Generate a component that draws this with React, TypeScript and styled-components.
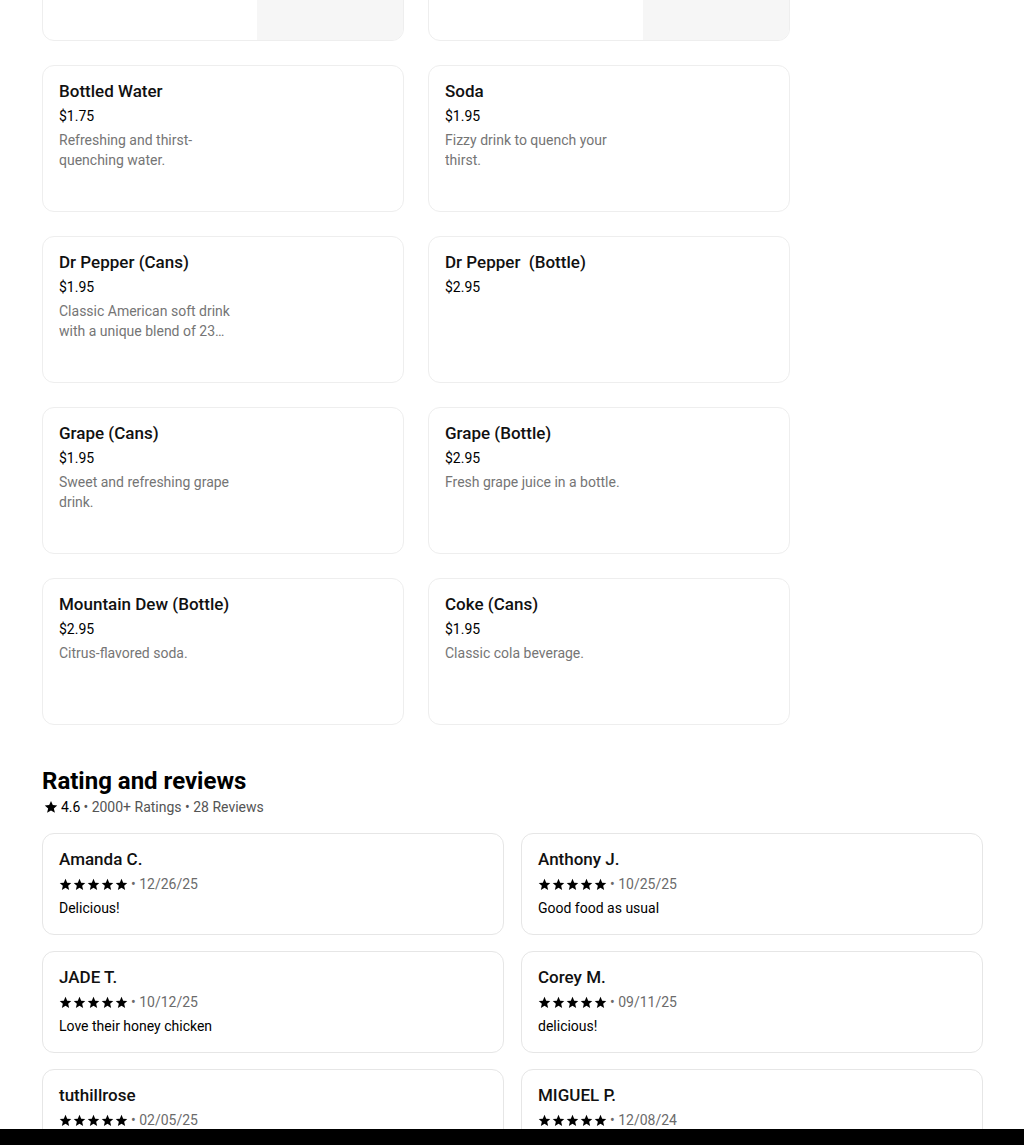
import { createGlobalStyle, styled } from 'styled-components';

const GlobalStyle = createGlobalStyle`
  body {
    margin: 0;
    background: #ffffff;
    font-family: Roboto, 'Liberation Sans', sans-serif;
    color: #000000;
  }
  * {
    box-sizing: border-box;
  }
`;

interface MenuItemType {
  name: string;
  price?: string;
  description?: string;
  hasImage?: boolean;
}

interface ReviewType {
  name: string;
  date: string;
  text: string;
}

const menuItems: MenuItemType[] = [
  { name: '', hasImage: true },
  { name: '', hasImage: true },
  { name: 'Bottled Water', price: '$1.75', description: 'Refreshing and thirst-quenching water.' },
  { name: 'Soda', price: '$1.95', description: 'Fizzy drink to quench your thirst.' },
  {
    name: 'Dr Pepper (Cans)',
    price: '$1.95',
    description: 'Classic American soft drink with a unique blend of 23 flavors.',
  },
  { name: 'Dr Pepper\u00a0 (Bottle)', price: '$2.95' },
  { name: 'Grape (Cans)', price: '$1.95', description: 'Sweet and refreshing grape drink.' },
  { name: 'Grape (Bottle)', price: '$2.95', description: 'Fresh grape juice in a bottle.' },
  { name: 'Mountain Dew (Bottle)', price: '$2.95', description: 'Citrus-flavored soda.' },
  { name: 'Coke (Cans)', price: '$1.95', description: 'Classic cola beverage.' },
];

const reviews: ReviewType[] = [
  { name: 'Amanda C.', date: '12/26/25', text: 'Delicious!' },
  { name: 'Anthony J.', date: '10/25/25', text: 'Good food as usual' },
  { name: 'JADE T.', date: '10/12/25', text: 'Love their honey chicken' },
  { name: 'Corey M.', date: '09/11/25', text: 'delicious!' },
  { name: 'tuthillrose', date: '02/05/25', text: '' },
  { name: 'MIGUEL P.', date: '12/08/24', text: '' },
];

const StarIcon = ({ size = 12 }: { size?: number }) => (
  <svg width={size} height={size} viewBox="0 0 24 24" aria-hidden="true">
    <path
      fill="currentColor"
      d="M12 1.5l3.1 7.1 7.6.7-5.8 5.1 1.8 7.6L12 18.1 5.3 22l1.8-7.6L1.3 9.3l7.6-.7L12 1.5z"
    />
  </svg>
);

export default function App() {
  return (
    <>
      <GlobalStyle />
      <Page>
        <MenuGrid>
          {menuItems.map((item, i) => (
            <MenuCard key={i}>
              <div className="info">
                {item.name && <ItemName>{item.name}</ItemName>}
                {item.price && <ItemPrice>{item.price}</ItemPrice>}
                {item.description && <ItemDesc>{item.description}</ItemDesc>}
              </div>
              {item.hasImage && <ImageSlot />}
            </MenuCard>
          ))}
        </MenuGrid>

        <SectionTitle>Rating and reviews</SectionTitle>
        <Summary>
          <StarIcon size={14} />
          <strong>4.6</strong>
          <span>• 2000+ Ratings • 28 Reviews</span>
        </Summary>

        <ReviewGrid>
          {reviews.map((r) => (
            <ReviewCard key={r.name}>
              <ReviewerName>{r.name}</ReviewerName>
              <ReviewMeta>
                <Stars>
                  {[0, 1, 2, 3, 4].map((n) => (
                    <StarIcon key={n} size={13} />
                  ))}
                </Stars>
                <span>• {r.date}</span>
              </ReviewMeta>
              <ReviewText>{r.text || '\u00a0'}</ReviewText>
            </ReviewCard>
          ))}
        </ReviewGrid>
      </Page>
      <BottomBar />
    </>
  );
}

const Page = styled.main`
  width: 941px;
  margin: -106px 0 0 42px;
  padding-bottom: 60px;
`;

const MenuGrid = styled.section`
  display: grid;
  grid-template-columns: repeat(2, 362px);
  column-gap: 24px;
  row-gap: 24px;
`;

const MenuCard = styled.div`
  height: 147px;
  display: flex;
  justify-content: space-between;
  border: 1px solid #eeeeee;
  border-radius: 12px;
  overflow: hidden;
  background: #ffffff;

  .info {
    padding: 15px 16px 16px;
    width: 215px;
    display: flex;
    flex-direction: column;
    gap: 4px;
  }
`;

const ImageSlot = styled.div`
  width: 146px;
  height: 100%;
  background: #f6f6f6;
`;

const ItemName = styled.p`
  margin: 0 0 1px;
  font-size: 17px;
  line-height: 20px;
  font-weight: 500;
  white-space: nowrap;
  color: #111111;
`;

const ItemPrice = styled.p`
  margin: 0;
  font-size: 14px;
  line-height: 20px;
  color: #000000;
`;

const ItemDesc = styled.p`
  margin: 0;
  width: 190px;
  font-size: 14px;
  line-height: 20px;
  color: #757575;
  display: -webkit-box;
  -webkit-line-clamp: 2;
  -webkit-box-orient: vertical;
  overflow: hidden;
`;

const SectionTitle = styled.h2`
  margin: 40px 0 0;
  font-size: 24px;
  line-height: 32px;
  font-weight: 700;
`;

const Summary = styled.div`
  display: flex;
  align-items: center;
  gap: 3px;
  font-size: 14px;
  line-height: 20px;
  color: #545454;
  padding-left: 2px;

  svg {
    color: #000000;
  }

  strong {
    font-weight: 400;
    color: #000000;
  }
`;

const ReviewGrid = styled.section`
  margin-top: 16px;
  display: grid;
  grid-template-columns: repeat(2, 1fr);
  gap: 16px 17px;
`;

const ReviewCard = styled.div`
  border: 1px solid #e6e6e6;
  border-radius: 12px;
  padding: 15px 16px 16px;
  display: flex;
  flex-direction: column;
  gap: 4px;
`;

const ReviewerName = styled.p`
  margin: 0 0 1px;
  font-size: 17px;
  line-height: 20px;
  font-weight: 500;
  color: #111111;
`;

const ReviewMeta = styled.div`
  display: flex;
  align-items: center;
  gap: 3px;
  font-size: 14px;
  line-height: 20px;
  color: #6b6b6b;
`;

const Stars = styled.span`
  display: inline-flex;
  gap: 1px;
  color: #000000;
`;

const ReviewText = styled.p`
  margin: 0;
  font-size: 14px;
  line-height: 20px;
`;

const BottomBar = styled.div`
  position: fixed;
  left: 0;
  right: 0;
  bottom: 0;
  height: 16px;
  background: #000000;
`;
